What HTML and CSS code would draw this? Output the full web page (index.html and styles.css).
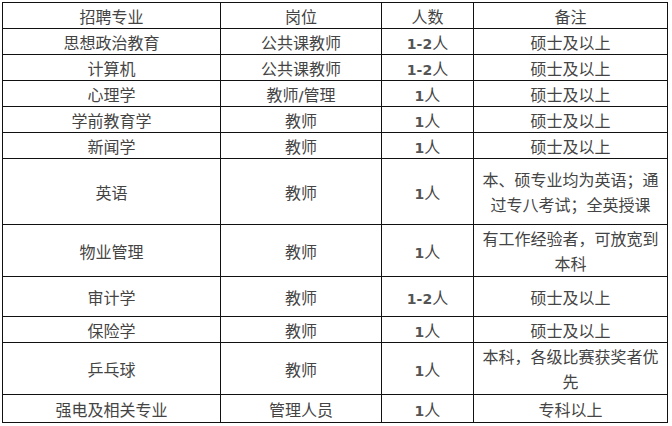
FILE: index.html
```html
<!DOCTYPE html>
<html lang="zh">
<head>
<meta charset="utf-8">
<title>招聘</title>
<link rel="stylesheet" href="styles.css">
</head>
<body>
<table class="jobs">
  <colgroup>
    <col class="c1"><col class="c2"><col class="c3"><col class="c4">
  </colgroup>
  <tr class="h26"><td>招聘专业</td><td>岗位</td><td>人数</td><td>备注</td></tr>
  <tr class="h26"><td>思想政治教育</td><td>公共课教师</td><td><span class="num">1-2</span>人</td><td>硕士及以上</td></tr>
  <tr class="h26"><td>计算机</td><td>公共课教师</td><td><span class="num">1-2</span>人</td><td>硕士及以上</td></tr>
  <tr class="h26"><td>心理学</td><td>教师<span class="num">/</span>管理</td><td><span class="num">1</span>人</td><td>硕士及以上</td></tr>
  <tr class="h26"><td>学前教育学</td><td>教师</td><td><span class="num">1</span>人</td><td>硕士及以上</td></tr>
  <tr class="h26"><td>新闻学</td><td>教师</td><td><span class="num">1</span>人</td><td>硕士及以上</td></tr>
  <tr class="h66"><td>英语</td><td>教师</td><td><span class="num">1</span>人</td><td class="note">本、硕专业均为英语；通过专八考试；全英授课</td></tr>
  <tr class="h52"><td>物业管理</td><td>教师</td><td><span class="num">1</span>人</td><td class="note">有工作经验者，可放宽到本科</td></tr>
  <tr class="h40"><td>审计学</td><td>教师</td><td><span class="num">1-2</span>人</td><td>硕士及以上</td></tr>
  <tr class="h26"><td>保险学</td><td>教师</td><td><span class="num">1</span>人</td><td>硕士及以上</td></tr>
  <tr class="h52"><td>乒乓球</td><td>教师</td><td><span class="num">1</span>人</td><td class="note">本科，各级比赛获奖者优先</td></tr>
  <tr class="h28"><td>强电及相关专业</td><td>管理人员</td><td><span class="num">1</span>人</td><td>专科以上</td></tr>
</table>
</body>
</html>
```
FILE: styles.css
```css
html, body {
  margin: 0;
  padding: 0;
  background: #ffffff;
}
body {
  padding: 2px 0 0 2px;
  font-family: "Noto Sans CJK SC", "Noto Sans", sans-serif;
  color: #444;
  font-size: 16px;
}
.jobs {
  border-collapse: collapse;
  table-layout: fixed;
  width: 665px;
}
.c1 { width: 218px; }
.c2 { width: 161px; }
.c3 { width: 92px; }
.c4 { width: 194px; }
.jobs td {
  border: 1px solid #111;
  text-align: center;
  vertical-align: middle;
  padding: 0 6px;
  line-height: 20px;
}
.num {
  font-family: "DejaVu Sans", "Liberation Sans", sans-serif;
  font-weight: bold;
  font-size: 14px;
  line-height: 14px;
  color: #555;
}
.jobs td.note {
  line-height: 25px;
}
.h26 { height: 26px; }
.h28 { height: 28px; }
.h40 { height: 40px; }
.h52 { height: 52px; }
.h66 { height: 66px; }
```
